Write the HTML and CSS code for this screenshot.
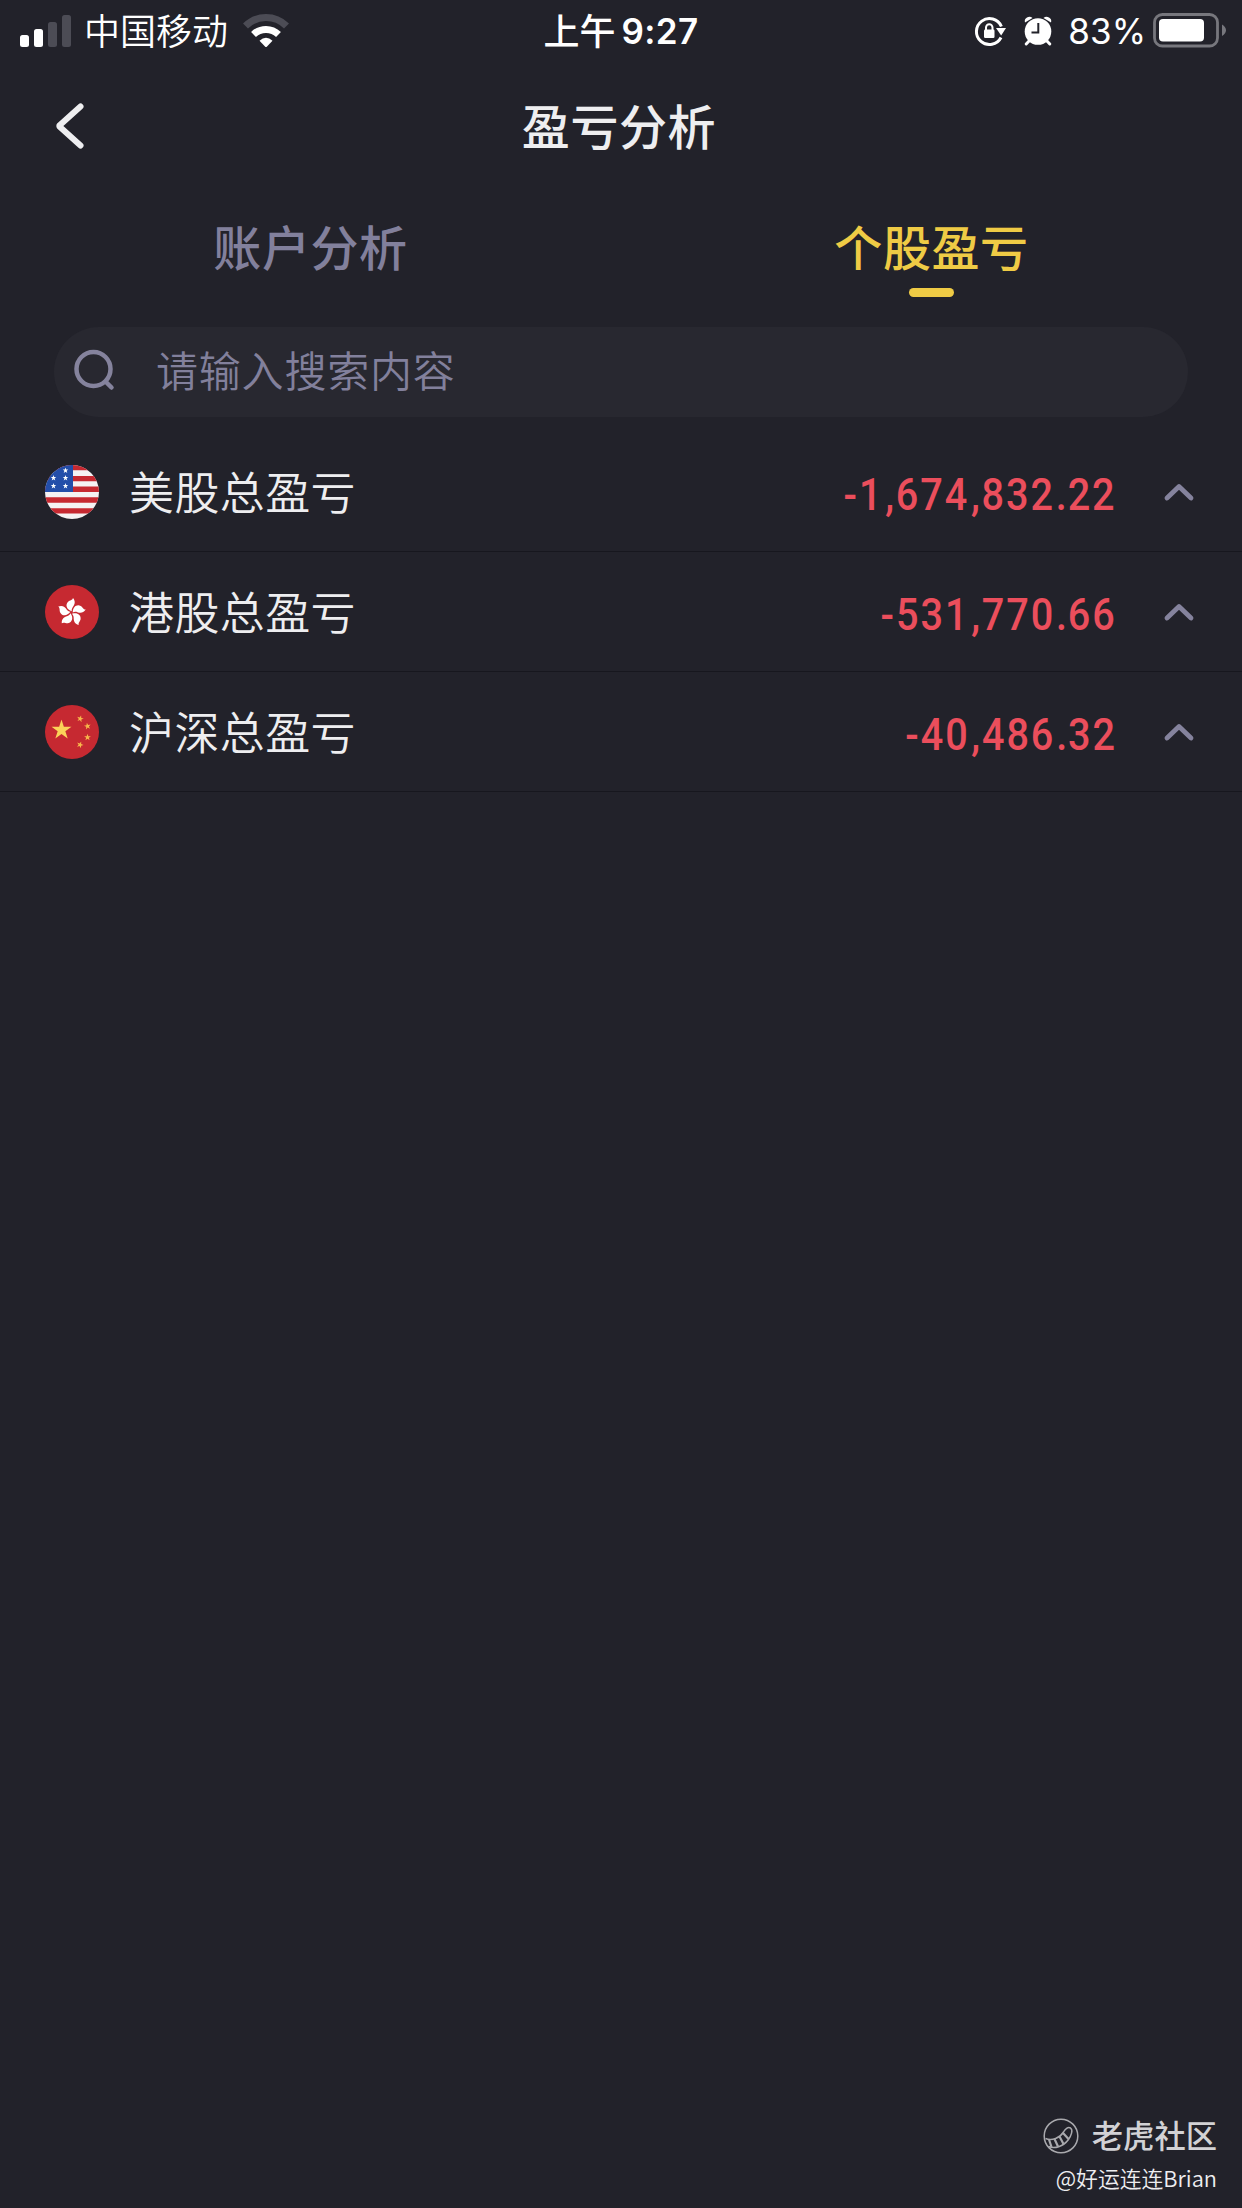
FILE: index.html
```html
<!DOCTYPE html>
<html lang="zh-CN">
<head>
<meta charset="utf-8">
<title>盈亏分析</title>
<link rel="stylesheet" href="styles.css">
</head>
<body>
<svg class="defs" aria-hidden="true">
  <symbol id="star" viewBox="-10 -10 20 20"><path d="M0-10 2.250-3.100H9.500L3.650 1.200 5.900 8.100 0 3.800-5.900 8.100-3.650 1.200-9.500-3.100H-2.250Z"/></symbol>
  <symbol id="chevron" viewBox="0 0 32 20"><path d="M4 16 16 4.500 28 16" fill="none" stroke="#85839d" stroke-width="4.800" stroke-linecap="round" stroke-linejoin="round"/></symbol>
</svg>
<div class="screen">
  <header class="status">
    <div class="status-left">
      <svg width="52" height="34" viewBox="0 0 52 34">
        <rect x="0" y="21" width="9" height="12" rx="2.500" fill="#fff"/>
        <rect x="14" y="15" width="9" height="18" rx="2.500" fill="#fff"/>
        <rect x="28" y="8" width="9" height="25" rx="2.500" fill="#4c4c55"/>
        <rect x="42" y="1" width="9" height="32" rx="2.500" fill="#4c4c55"/>
      </svg>
      <span class="carrier">中国移动</span>
      <svg class="wifi" width="46" height="34" viewBox="0 0 46 34">
        <path d="M2.500 12A29 29 0 0 1 43.500 12" fill="none" stroke="#4c4c55" stroke-width="7"/>
        <path d="M10.500 20.500A18 18 0 0 1 35.500 20.500" fill="none" stroke="#fff" stroke-width="7"/>
        <path d="M16.500 26.800Q23 20.600 29.500 26.800L24 32.500Q23 33.500 22 32.500Z" fill="#fff"/>
      </svg>
    </div>
    <div class="clock">上午<span class="time">9:27</span></div>
    <div class="status-right">
      <svg width="34" height="34" viewBox="0 0 34 34">
        <path d="M29 23.500A13 13 0 1 1 29.400 12.500" fill="none" stroke="#fff" stroke-width="3"/>
        <path d="M24 14H34L29.200 21.500Z" fill="#fff"/>
        <rect x="12" y="15.500" width="10.500" height="8.500" rx="1.200" fill="#fff"/>
        <path d="M14 16V13.500A3.250 3.250 0 0 1 20.500 13.500V16" fill="none" stroke="#fff" stroke-width="2"/>
      </svg>
      <svg class="alarm" width="30" height="32" viewBox="0 0 30 32">
        <path d="M2 7.500Q1 4 4 2.500 7 1 9.500 3ZM28 7.500Q29 4 26 2.500 23 1 20.500 3Z" fill="#fff"/>
        <path d="M7 25 3.200 29M23 25 26.800 29" stroke="#fff" stroke-width="3" stroke-linecap="round"/>
        <circle cx="15" cy="16.500" r="13.300" fill="#fff"/>
        <path d="M15.300 8V17.500H8.500" fill="none" stroke="#22222a" stroke-width="2"/>
      </svg>
      <span class="percent">83%</span>
      <svg width="74" height="36" viewBox="0 0 74 36">
        <rect x="1.500" y="1.500" width="63" height="31.500" rx="8" fill="none" stroke="#77777d" stroke-width="2.800"/>
        <rect x="6" y="6" width="45" height="22.500" rx="4" fill="#fff"/>
        <path d="M69 11.500Q73 14 73 17.250T69 23Z" fill="#77777d"/>
      </svg>
    </div>
  </header>

  <nav class="nav">
    <svg class="back" width="36" height="52" viewBox="0 0 36 52"><path d="M30.500 6.500 9.700 25.200Q8.900 26 9.700 26.800L30.500 45.500" fill="none" stroke="#eeeef0" stroke-width="6" stroke-linecap="round" stroke-linejoin="round"/></svg>
    <h1 class="title">盈亏分析</h1>
  </nav>

  <div class="tabs">
    <div class="tab">账户分析</div>
    <div class="tab active">个股盈亏</div>
  </div>

  <div class="search">
    <svg class="lens" width="44" height="44" viewBox="0 0 44 44"><circle cx="20.500" cy="20" r="17" fill="none" stroke="#85839d" stroke-width="4.500"/><path d="M33 33 38.500 38.500" stroke="#85839d" stroke-width="4.500" stroke-linecap="round"/></svg>
    <span class="placeholder">请输入搜索内容</span>
  </div>

  <main class="list">
    <div class="row">
      <svg class="flag" viewBox="0 0 54 54">
        <clipPath id="disc"><circle cx="27" cy="27" r="27"/></clipPath>
        <g clip-path="url(#disc)">
          <path fill="#f5f2f3" d="M0 0H54V54H0Z"/>
          <path fill="#c62931" d="M0 0H54V5.300H0ZM0 11H54V16.300H0ZM0 21.500H54V27H0ZM0 32.300H54V37.800H0ZM0 43.200H54V48.600H0Z"/>
          <path fill="#234ea9" d="M0 0H28V27H0Z"/>
          <g fill="#fff"><use href="#star" x="17.500" y="2.500" width="6" height="6"/><use href="#star" x="5.500" y="10" width="6" height="6"/><use href="#star" x="17.500" y="10" width="6" height="6"/><use href="#star" x="5.500" y="18" width="6" height="6"/><use href="#star" x="17.500" y="18" width="6" height="6"/></g>
        </g>
      </svg>
      <span class="name">美股总盈亏</span>
      <span class="amount"><i class="minus">-</i>1<i class="comma">,</i>674<i class="comma">,</i>832<i class="dot">.</i>22</span>
      <svg class="arrow"><use href="#chevron"/></svg>
    </div>
    <div class="row">
      <svg class="flag" viewBox="0 0 54 54">
        <circle cx="27" cy="27" r="27" fill="#c62931"/>
        <g transform="translate(26.500 27.500)">
          <g fill="#fff">
            <path id="petal" d="M.3-1.200C-4.800-3-6.600-7.500-3.400-10.800-1.600-12.500.8-12 1.500-14.500 4.500-10.800 3-7.800 1.500-5.800.4-4.300 0-2.800.3-1.200Z"/>
            <use href="#petal" transform="rotate(72)"/><use href="#petal" transform="rotate(144)"/><use href="#petal" transform="rotate(216)"/><use href="#petal" transform="rotate(288)"/>
          </g>
        </g>
      </svg>
      <span class="name">港股总盈亏</span>
      <span class="amount"><i class="minus">-</i>531<i class="comma">,</i>770<i class="dot">.</i>66</span>
      <svg class="arrow"><use href="#chevron"/></svg>
    </div>
    <div class="row">
      <svg class="flag" viewBox="0 0 54 54">
        <circle cx="27" cy="27" r="27" fill="#c62931"/>
        <g fill="#fbd259">
          <use href="#star" x="6" y="14.500" width="21" height="21"/>
          <g fill="#f7b84b"><use href="#star" transform="translate(35.200 13.800) rotate(15)" x="-3.600" y="-3.600" width="7.200" height="7.200"/><use href="#star" transform="translate(42.500 21.200) rotate(-10)" x="-3.600" y="-3.600" width="7.200" height="7.200"/><use href="#star" x="38.900" y="28.700" width="7.200" height="7.200"/><use href="#star" transform="translate(35 39.800) rotate(20)" x="-3.600" y="-3.600" width="7.200" height="7.200"/></g>
        </g>
      </svg>
      <span class="name">沪深总盈亏</span>
      <span class="amount"><i class="minus">-</i>40<i class="comma">,</i>486<i class="dot">.</i>32</span>
      <svg class="arrow"><use href="#chevron"/></svg>
    </div>
  </main>

  <footer class="credit">
    <div class="brand">
      <svg width="36" height="36" viewBox="0 0 36 36" fill="none" stroke="#a9a9ad" stroke-width="1.500">
        <circle cx="18" cy="18" r="16.800"/>
        <path d="M2.500 20.500C9 23 17 20 20.500 14 22 11 25 8.500 27.500 10 30.500 12 28 18 25.500 21.500 20 29 11.500 31 5.500 28.500"/>
        <path d="M6 21.500 8.500 29M11.500 21 15 28.500M16.500 18.500 20.500 26M20 15 25.500 21" stroke-width="2.200"/>
      </svg>
      <span>老虎社区</span>
    </div>
    <div class="author">@好运连连Brian</div>
  </footer>
</div>
</body>
</html>
```
FILE: styles.css
```css
* { box-sizing: border-box; }
body {
  margin: 0;
  background: #22222a;
  color: #eeeef0;
  font-family: "Noto Sans CJK SC", sans-serif;
}
svg { display: block; flex: none; }
.defs { position: absolute; width: 0; height: 0; }
.screen {
  width: 1242px;
  height: 2208px;
  display: flex;
  flex-direction: column;
  overflow: hidden;
}
.status {
  height: 62px;
  display: grid;
  grid-template-columns: 1fr auto 1fr;
  align-items: center;
  padding: 0 15px 0 20px;
  color: #fff;
  font-size: 36px;
  line-height: 60px;
  white-space: nowrap;
}
.status-left, .status-right, .clock { display: flex; align-items: center; }
.carrier { margin: -4px 0 0 12px; font-weight: 350; }
.wifi { margin-left: 15px; }
.clock { margin: -4px 5px 0 0; font-size: 36px; font-weight: 500; }
.time { margin: 4px 0 0 6px; font: 600 35px/60px Inter, sans-serif; letter-spacing: .4px; }
.status-right { justify-content: flex-end; }
.alarm { margin-left: 17px; }
.percent { margin: 0 7px 0 15px; font: 400 35px/60px Inter, sans-serif; }
.nav {
  height: 128px;
  display: grid;
  grid-template-columns: 1fr auto 1fr;
  align-items: center;
  padding: 0 54px 0 50px;
}
.title { margin: -5px 0 0; font-size: 48px; line-height: 72px; font-weight: 500; letter-spacing: .6px; }
.tabs { height: 137px; display: flex; }
.tab {
  flex: 1;
  display: flex;
  flex-direction: column;
  align-items: center;
  padding-top: 19px;
  color: #82809c;
  font-size: 48px;
  line-height: 72px;
  font-weight: 500;
  letter-spacing: .6px;
}
.active { color: #efcb45; }
.active::after {
  content: "";
  width: 45px;
  height: 9px;
  margin-top: 7px;
  border-radius: 5px;
  background: #efcb45;
}
.search {
  height: 90px;
  margin: 0 54px 15px;
  padding-left: 19px;
  display: flex;
  align-items: center;
  border-radius: 45px;
  background: #282830;
}
.lens { margin-top: -3px; }
.placeholder { margin: -7px 0 0 39px; color: #82809c; font-size: 42px; line-height: 60px; letter-spacing: .8px; font-weight: 350; }
.row {
  height: 120px;
  display: flex;
  align-items: center;
  padding: 0 47px 0 45px;
  border-bottom: 1px solid #17171e;
}
.flag { width: 54px; height: 54px; }
.name { margin: -2px 0 0 30px; font-size: 45px; line-height: 66px; font-weight: 350; letter-spacing: .4px; }
.amount {
  margin: 7px 46px 0 auto;
  display: flex;
  color: #eb4e5c;
  font: 500 45px/60px Roboto, sans-serif;
  letter-spacing: 2.200px;
  transform: scaleX(.88);
  transform-origin: right;
}
.amount i { font-style: normal; text-align: center; letter-spacing: 0; }
.minus { width: 20px; }
.comma { width: 14px; }
.dot { width: 14.500px; }
.arrow { width: 32px; height: 20px; }
.credit {
  margin-top: auto;
  padding: 0 25px 13px 0;
  display: flex;
  flex-direction: column;
  align-items: flex-end;
}
.brand { display: flex; align-items: center; gap: 13px; color: #d2d2d5; font-size: 31.300px; line-height: 48px; font-weight: 500; }
.brand span { margin-top: -1px; }
.author { font-size: 21.800px; line-height: 34px; margin-top: 2px; color: #eeeef0; font-weight: 350; }
```
